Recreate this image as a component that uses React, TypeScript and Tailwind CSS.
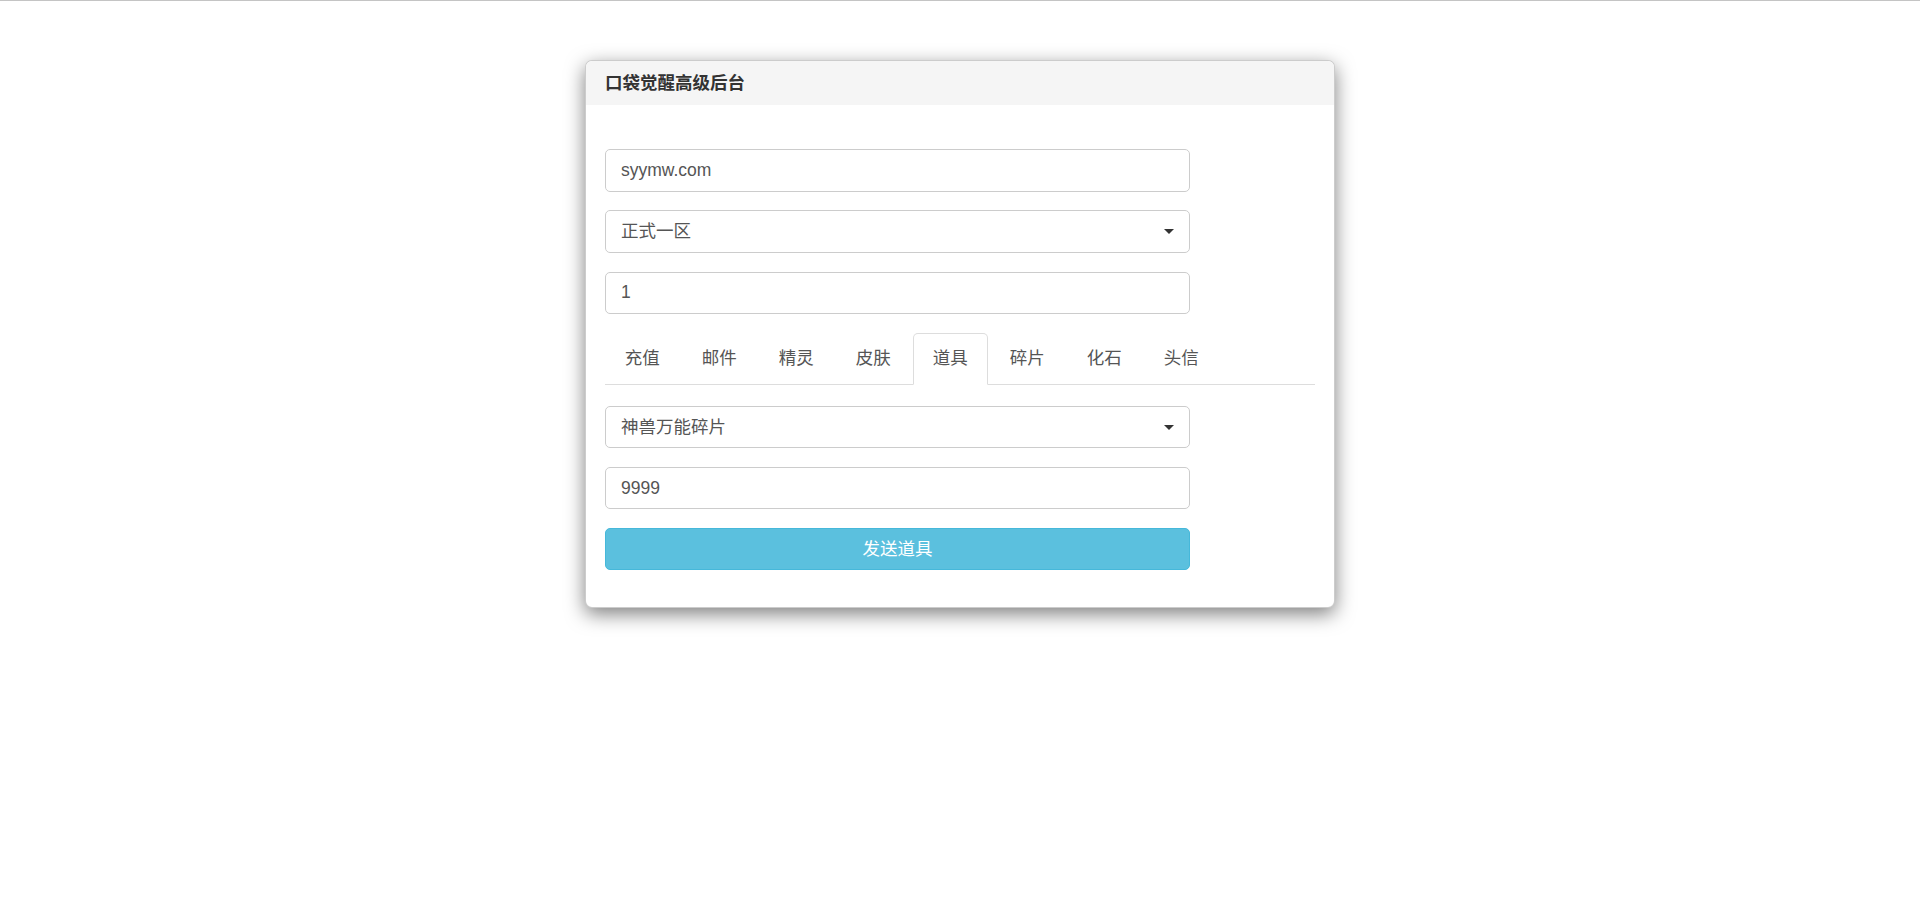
import React from "react";

const TABS = ["充值", "邮件", "精灵", "皮肤", "道具", "碎片", "化石", "头信"];

const FONT = "font-['Liberation_Sans','Noto_Sans_CJK_SC',sans-serif]";

function Caret() {
  return (
    <svg width="10" height="5" viewBox="0 0 10 5" className="shrink-0">
      <path d="M0 0h10L5 5z" fill="#333" />
    </svg>
  );
}

function TextField({ value }: { value: string }) {
  return (
    <input
      readOnly
      value={value}
      className="h-[42.5px] w-full rounded-[5px] border border-[#ccc] bg-white px-[15px] text-[17.5px] text-[#555] outline-none"
    />
  );
}

function SelectField({ value }: { value: string }) {
  return (
    <div className="flex h-[42.5px] w-full items-center justify-between rounded-[5px] border border-[#ccc] bg-white pl-[15px] pr-[15px] text-[17.5px] text-[#555]">
      <span>{value}</span>
      <Caret />
    </div>
  );
}

export default function App() {
  const active = "道具";
  return (
    <div className={`min-h-[902px] border-t border-[#c4c4c4] bg-white ${FONT}`}>
      <div className="mx-auto mt-[59px] w-[750px] overflow-hidden rounded-[7px] border border-[rgba(0,0,0,0.2)] bg-white shadow-[0_6px_19px_rgba(0,0,0,0.5)]">
        {/* Header */}
        <div className="flex h-[44px] items-center bg-[#f5f5f5] px-[19px]">
          <h3 className="text-[17.5px] font-semibold text-[#333]">口袋觉醒高级后台</h3>
        </div>

        {/* Body */}
        <div className="px-[19px] pt-[44px] pb-[37px]">
          <div className="flex w-[585px] flex-col gap-[18.75px]">
            <TextField value="syymw.com" />
            <SelectField value="正式一区" />
            <TextField value="1" />
          </div>

          <ul className="mt-[18.75px] flex border-b border-[#ddd]">
            {TABS.map((t) => (
              <li key={t} className="-mb-px mr-[2.5px]">
                <span
                  className={
                    t === active
                      ? "block rounded-t-[5px] border border-[#ddd] border-b-transparent bg-white px-[18.75px] py-[12.5px] text-[17.5px] leading-[25px] text-[#555]"
                      : "block rounded-t-[5px] border border-transparent px-[18.75px] py-[12.5px] text-[17.5px] leading-[25px] text-[#555]"
                  }
                >
                  {t}
                </span>
              </li>
            ))}
          </ul>

          <div className="mt-[21px] flex w-[585px] flex-col gap-[18.5px]">
            <SelectField value="神兽万能碎片" />
            <TextField value="9999" />
            <button className="h-[42px] w-full rounded-[5px] border border-[#46b8da] bg-[#5bc0de] text-[17.5px] text-white">
              发送道具
            </button>
          </div>
        </div>
      </div>
    </div>
  );
}
